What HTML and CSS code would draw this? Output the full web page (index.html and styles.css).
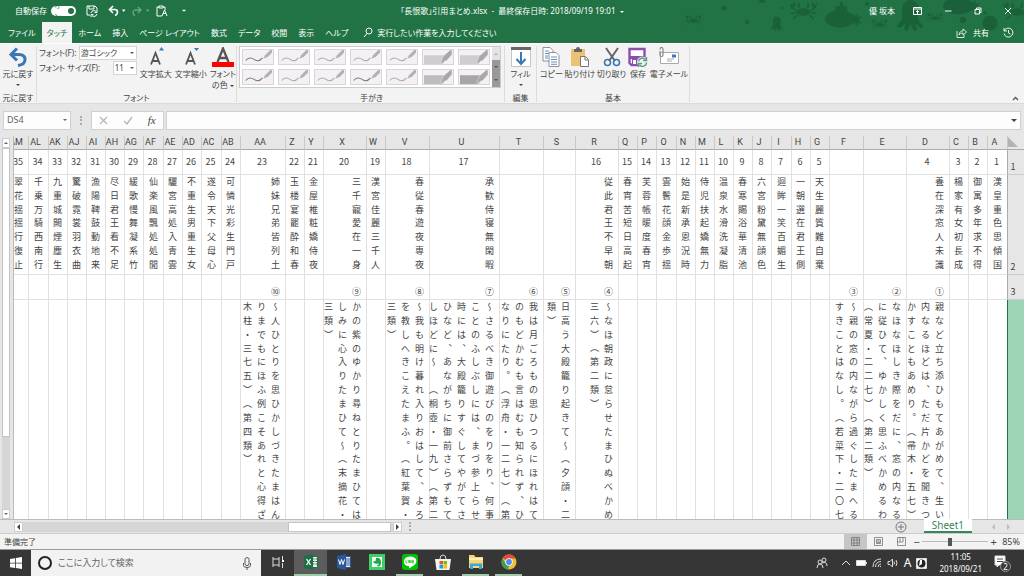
FILE: index.html
```html
<!DOCTYPE html>
<html lang="ja">
<head>
<meta charset="utf-8">
<title>「長恨歌」引用まとめ.xlsx</title>
<link rel="stylesheet" href="styles.css">
</head>
<body>
<svg class="defs" aria-hidden="true">
  <symbol id="pen" viewBox="0 0 32 16"><path d="M2 12c3-4 7-3 10-1s6 2 9-2" fill="none" stroke="currentColor" stroke-width="1.2"/><path d="M22 10l2-4 6-6h2v3l-5 5z" fill="#b4b0b4"/></symbol>
  <symbol id="marker" viewBox="0 0 32 16"><path d="M0 6h24l-3 10H0z" fill="currentColor"/><path d="M19 15l3-8 8-7h2v5l-6 7-3 1-1 2z" fill="#aaa7aa" stroke="#eee" stroke-width=".5"/></symbol>
  <symbol id="crab" viewBox="0 0 28 22"><path d="M7 13c2-5 12-5 14 0-1 5-13 5-14 0zM9 9L8 5l2-1 1 5zM17 9l1-5 2 1-1 4z"/><path d="M7 12L2 8M6 14H1M8 16l-4 4M21 12l5-4M22 14h5M20 16l4 4" fill="none" stroke="#1a6139" stroke-width="1.6"/><path d="M0 4l3 2 2-4 1 5-4 3zM28 4l-3 2-2-4-1 5 4 3z"/></symbol>
  <symbol id="octopus" viewBox="0 0 24 30"><path d="M4 10a8 9 0 0 1 16 0c0 4-2 6-1 9s4 4 5 7l-3 1-4-4 1 6-3 1-3-7-3 7-3-1 1-6-4 4-4-1c1-4 4-4 5-7s0-5 0-9z"/></symbol>
  <symbol id="submarine" viewBox="0 0 38 28"><ellipse cx="15" cy="18" rx="15" ry="8.5"/><path d="M10 10l1-5h4V1h3v4h3l2 6zM27 18l5-6 1 4 4-1-3 4 3 4-4-1-1 4z"/></symbol>
</svg>

<header class="top">
  <svg class="sea" viewBox="0 0 344 43" aria-hidden="true" fill="#1a6139">
    <use href="#crab" x="5" y="13" width="17" height="13"/><circle cx="44" cy="8" r="2.6"/><circle cx="67" cy="22" r="2"/><circle cx="82" cy="0" r="3"/>
    <use href="#octopus" x="91" y="16" width="12" height="15"/><circle cx="102" cy="8" r="1.5"/>
    <use href="#crab" x="109" y="-1" width="29" height="22"/><use href="#submarine" x="145" y="1" width="38" height="28"/>
    <circle cx="187" cy="4" r="2"/><use href="#crab" x="191" y="17" width="17" height="13"/><use href="#octopus" x="217" y="-1" width="27" height="32"/>
    <use href="#crab" x="247" y="11" width="16" height="12"/><use href="#submarine" x="263" y="-12" width="38" height="28"/><circle cx="283" cy="20" r="3.2"/><circle cx="310" cy="23" r="7.5"/><circle cx="305" cy="13" r="1.5"/><use href="#crab" x="323" y="-2" width="28" height="24"/>
  </svg>
  <div class="titlebar">
    <div class="quick">
      <label class="autosave">自動保存 <input type="checkbox" checked><span class="switch">オン<i></i></span></label>
      <button aria-label="保存"><svg width="12" height="12" viewBox="0 0 12 12"><path d="M1 1h8l2 2v2M1 1v9h3M3 1v3h5V1M5 8a3 3 0 0 1 5.500-1M11 5v2.500H8.500M11 9a3 3 0 0 1-5.500 1M5 12V9.500h2.500" /></svg></button>
      <button class="undo" aria-label="元に戻す"><svg width="18" height="12" viewBox="0 0 18 12"><path d="M5 1L1.500 4.500 5 8M2 4.500h4.500q3 0 3 2.500T7 10.500" stroke-width="1.600"/><path d="M14 4.500h3.500L15.700 7z" fill="#fff" stroke="none"/></svg></button>
      <button class="redo" aria-label="やり直し"><svg width="18" height="12" viewBox="0 0 18 12"><path d="M6 2l3 3-3 3M9 5H4Q1 5 1 7.500T3 10.500" stroke-width="1.300"/><path d="M14 4.500h3.500L15.700 7z" fill="#fff" stroke="none"/></svg></button>
      <button aria-label="貼り付け"><svg width="12" height="12" viewBox="0 0 12 12"><path d="M3 2H1v9h5M3 3V1h4v2zM7 2h2v3M6 11l2.500-6L11 11M7 8.500h3"/></svg></button>
      <button aria-label="カスタマイズ"><svg width="12" height="12" viewBox="0 0 12 12"><path d="M4.500 5h3L6 6.500z" fill="#fff" stroke-width=".5"/></svg></button>
    </div>
    <h1>「長恨歌」引用まとめ.xlsx &nbsp;-&nbsp; 最終保存日時: 2018/09/19 19:01 &nbsp;<span class="caret"></span></h1>
    <div class="window">
      <span>優 坂本</span>
      <button aria-label="リボンの表示"><svg width="9" height="8" viewBox="0 0 9 8"><path d="M.5.500h8v7h-8zM.5 2h8M4.500 7V3.500M3 5l1.500-1.500L6 5"/></svg></button>
      <button aria-label="最小化"><svg width="8" height="8" viewBox="0 0 8 8"><path d="M1 4h6.500"/></svg></button>
      <button aria-label="元のサイズ"><svg width="8" height="8" viewBox="0 0 8 8"><path d="M1 2.500h4.500V7H1zM2.500 2.500V1h4.500v4.500H5.500"/></svg></button>
      <button aria-label="閉じる"><svg width="8" height="8" viewBox="0 0 8 8"><path d="M1 1l6 6M7 1L1 7"/></svg></button>
    </div>
  </div>
  <nav class="tabs">
    <a href="#">ファイル</a><a href="#" class="active">タッチ</a><a href="#">ホーム</a><a href="#">挿入</a><a href="#">ページ レイアウト</a><a href="#">数式</a><a href="#">データ</a><a href="#">校閲</a><a href="#">表示</a><a href="#">ヘルプ</a>
    <a href="#" class="tell"><svg width="10" height="11" viewBox="0 0 10 11"><path d="M1 10l3.500-4" /><circle cx="6" cy="4" r="3"/></svg>実行したい作業を入力してください</a>
    <a href="#" class="share"><svg width="11" height="10" viewBox="0 0 11 10"><path d="M1 3v6.500h7V7M3 7c0-3 2-4 4-4V1l3.500 3L7 7V5C5 5 4 5.500 3 7z" stroke-width=".8"/></svg>共有</a>
    <a href="#" class="history" aria-label="履歴"><svg width="11" height="11" viewBox="0 0 11 11"><path d="M1 1v3h3M1.200 4a4.500 4.500 0 1 1-.2 2.500M5.500 3v3l2 1.200" stroke-width=".9"/></svg></a>
  </nav>
</header>

<section class="ribbon">
  <div class="group g-undo">
    <div class="tools"><button class="tool"><svg width="20" height="20" viewBox="0 0 20 20"><path d="M9 1.500L3 7.500l6 6M4 7.500h7q6 0 6 5T10 18.500" fill="none" stroke="#3a78b4" stroke-width="3"/></svg>元に戻す<span class="caret"></span></button></div>
    <h2>元に戻す</h2>
  </div>
  <div class="group g-font">
    <div class="tools">
      <div class="fields">
        <div class="field"><label for="font">フォント(F):</label><span class="pick wide"><select id="font"><option>游ゴシック</option></select></span></div>
        <div class="field"><label for="size">フォント サイズ(F):</label><span class="pick"><select id="size"><option>11</option></select></span></div>
      </div>
      <button class="tool"><svg width="20" height="20" viewBox="0 0 20 20"><path d="M5 17.500L9.500 6l4.500 11.500M6.500 14h6" fill="none" stroke="#555" stroke-width="1.800"/><path d="M13 3.500L15.500 0 18 3.500z" fill="#3a78b4"/></svg>文字拡大</button>
      <button class="tool"><svg width="20" height="20" viewBox="0 0 20 20"><path d="M5 17.500L9.500 6l4.500 11.500M6.500 14h6" fill="none" stroke="#555" stroke-width="1.800"/><path d="M13 1h5l-2.500 3z" fill="#3a78b4"/></svg>文字縮小</button>
      <button class="tool two"><svg width="22" height="20" viewBox="0 0 22 20"><path d="M5.500 15L11 1.500 16.500 15M7.500 11h7" fill="none" stroke="#555" stroke-width="2.300"/><path d="M0 15h22v5H0z" fill="#f00"/></svg>フォント<span>の色 <span class="caret"></span></span></button>
    </div>
    <h2>フォント</h2>
  </div>
  <div class="group g-ink">
    <div class="gallery">
      <div class="pens">
        <button aria-label="ペン 1" class="p1"><svg><use href="#pen"/></svg></button><button aria-label="ペン 2" class="p2"><svg><use href="#pen"/></svg></button><button aria-label="ペン 3" class="p2"><svg><use href="#pen"/></svg></button><button aria-label="ペン 4" class="p2"><svg><use href="#pen"/></svg></button><button aria-label="ペン 5" class="p2"><svg><use href="#pen"/></svg></button><button aria-label="蛍光ペン 1" class="m1"><svg><use href="#marker"/></svg></button><button aria-label="蛍光ペン 2" class="m1"><svg><use href="#marker"/></svg></button>
        <button aria-label="ペン 6" class="p1"><svg><use href="#pen"/></svg></button><button aria-label="ペン 7" class="p2"><svg><use href="#pen"/></svg></button><button aria-label="ペン 8" class="p2"><svg><use href="#pen"/></svg></button><button aria-label="ペン 9" class="p1"><svg><use href="#pen"/></svg></button><button aria-label="ペン 10" class="p2"><svg><use href="#pen"/></svg></button><button aria-label="蛍光ペン 3" class="m2"><svg><use href="#marker"/></svg></button><button aria-label="蛍光ペン 4" class="m3"><svg><use href="#marker"/></svg></button>
      </div>
      <div class="more"><button aria-label="上"><i class="caret up"></i></button><button aria-label="下"><i class="caret"></i></button><button aria-label="その他"><i class="caret"></i></button></div>
    </div>
    <h2>手がき</h2>
  </div>
  <div class="group g-edit">
    <div class="tools"><button class="tool"><svg width="20" height="20" viewBox="0 0 20 20"><path d="M.5.500h19v19H.5z" fill="#fff" stroke="#c6c6c6"/><path d="M0 0h20v3H0z" fill="#666"/><path d="M10 5v12M5.500 12l4.500 5 4.500-5" fill="none" stroke="#3a78b4" stroke-width="2"/></svg>フィル<span class="caret"></span></button></div>
    <h2>編集</h2>
  </div>
  <div class="group g-basic">
    <div class="tools">
      <button class="tool"><svg width="18" height="20" viewBox="0 0 18 20"><g fill="#fff" stroke="#777" stroke-width=".8"><path d="M1 .5h7l3 3V14H1z"/><path d="M7 5.500h7l3 3v11H7z"/></g><path d="M3 4h4M3 6.500h4M3 9h3M3 11h3M9 10h6M9 12.500h6M9 15h6M9 17.300h6" stroke="#5b93c6"/></svg>コピー</button>
      <button class="tool"><svg width="18" height="20" viewBox="0 0 18 20"><path d="M0 2h14v17H0z" fill="#ecc273"/><path d="M3 2h2q0-2 2-2t2 2h2v3H3z" fill="#666"/><path d="M9.500 9.500h5l3 3v7h-8zM14 10v3h3" fill="#fff" stroke="#777"/></svg>貼り付け</button>
      <button class="tool"><svg width="18" height="20" viewBox="0 0 18 20"><path d="M3 1l9 13M15 1L6 14" stroke="#666" stroke-width="2"/><g fill="none" stroke="#3a78b4" stroke-width="1.600"><circle cx="4.500" cy="15.500" r="3"/><circle cx="13.500" cy="15.500" r="3"/></g></svg>切り取り</button>
      <button class="tool"><svg width="20" height="20" viewBox="0 0 20 20"><path d="M1.500 2h15v16h-13l-2-2z" fill="#fff" stroke="#8e4cae" stroke-width="2.400"/><path d="M2 9h14v3H2zM4 12h9v6H4z" fill="#8e4cae"/><path d="M5 13h3v4H5z" fill="#fff"/><circle cx="14.500" cy="15" r="5.500" fill="#f2f2f2"/><path d="M10.500 14.500a4 4 0 0 1 7-2M18.500 15.500a4 4 0 0 1-7 2.500M18.500 10v3.500H15M10.500 20v-3.500H14" fill="none" stroke="#5aa182" stroke-width="1.400"/></svg>保存</button>
      <button class="tool"><svg width="22" height="20" viewBox="0 0 22 20"><path d="M2.500 5.500h18v11h-18z" fill="#fff" stroke="#aaa"/><path d="M14 7.500h4v3h-4z" fill="#3a78b4"/><path d="M9 12h7M9 14h5" stroke="#aaa"/><path d="M2 4v4q0 1.500 1.500 1.500T5 8V2.500Q5 .5 3.500.5T2 2.500" fill="none" stroke="#888" stroke-width="1.200"/></svg>電子メール</button>
    </div>
    <h2>基本</h2>
  </div>
  <button class="collapse" aria-label="リボンを折りたたむ"><svg width="7" height="5" viewBox="0 0 7 5"><path d="M1 4l2.500-2.500L6 4" fill="none" stroke="#555" stroke-width="1.300"/></svg></button>
</section>

<section class="formula">
  <div class="namebox"><input aria-label="名前ボックス" value="DS4"><span class="caret"></span></div>
  <i class="grip"></i>
  <div class="fx">
    <button aria-label="キャンセル"><svg width="9" height="9" viewBox="0 0 9 9"><path d="M1 1l7 7M8 1L1 8" stroke="#b5b5b5" stroke-width="1.200"/></svg></button>
    <button aria-label="入力"><svg width="10" height="9" viewBox="0 0 10 9"><path d="M1 5l3 3 5-7" fill="none" stroke="#b5b5b5" stroke-width="1.300"/></svg></button>
    <button class="fn">fx</button>
  </div>
  <div class="entry"><input aria-label="数式バー"><span class="caret"></span></div>
</section>

<main class="work">
  <div class="vscroll"><button aria-label="上へ"><i class="caret up"></i></button><div class="vtrack"><div class="vthumb"></div></div><button aria-label="下へ"><i class="caret"></i></button></div>
  <div class="sheet" dir="rtl">
    <table>
      <colgroup><col style="width:17px"><col style="width:20px"><col style="width:19px"><col style="width:19px"><col style="width:43px"><col style="width:43px"><col style="width:34px"><col style="width:19px"><col style="width:19px"><col style="width:20px"><col style="width:19px"><col style="width:19px"><col style="width:19px"><col style="width:19px"><col style="width:19px"><col style="width:20px"><col style="width:19px"><col style="width:19px"><col style="width:43px"><col style="width:32px"><col style="width:44px"><col style="width:70px"><col style="width:44px"><col style="width:19px"><col style="width:43px"><col style="width:19px"><col style="width:19px"><col style="width:45px"><col style="width:19px"><col style="width:20px"><col style="width:19px"><col style="width:19px"><col style="width:20px"><col style="width:19px"><col style="width:19px"><col style="width:19px"><col style="width:19px"><col style="width:19px"><col style="width:20px"><col style="width:19px"></colgroup>
      <thead><tr><th class="corner"><svg width="10" height="10" viewBox="0 0 10 10"><path d="M0 0v10h10z" fill="#b4b4b4"/></svg></th><th>A</th><th>B</th><th>C</th><th>D</th><th>E</th><th>F</th><th>G</th><th>H</th><th>I</th><th>J</th><th>K</th><th>L</th><th>M</th><th>N</th><th>O</th><th>P</th><th>Q</th><th>R</th><th>S</th><th>T</th><th>U</th><th>V</th><th>W</th><th>X</th><th>Y</th><th>Z</th><th>AA</th><th>AB</th><th>AC</th><th>AD</th><th>AE</th><th>AF</th><th>AG</th><th>AH</th><th>AI</th><th>AJ</th><th>AK</th><th>AL</th><th>AM</th></tr></thead>
      <tbody>
        <tr class="r1"><th>1</th><td>1</td><td>2</td><td>3</td><td>4</td><td></td><td></td><td>5</td><td>6</td><td>7</td><td>8</td><td>9</td><td>10</td><td>11</td><td>12</td><td>13</td><td>14</td><td>15</td><td>16</td><td></td><td></td><td>17</td><td>18</td><td>19</td><td>20</td><td>21</td><td>22</td><td>23</td><td>24</td><td>25</td><td>26</td><td>27</td><td>28</td><td>29</td><td>30</td><td>31</td><td>32</td><td>33</td><td>34</td><td>35</td></tr>
        <tr class="r2"><th>2</th><td><p>漢皇重色思傾国</p></td><td><p>御寓多年求不得</p></td><td><p>楊家有女初長成</p></td><td><p>養在深窓人未識</p></td><td></td><td></td><td><p>天生麗質難自棄</p></td><td><p>一朝選在君王側</p></td><td><p>迴眸一笑百媚生</p></td><td><p>六宮粉黛無顔色</p></td><td><p>春寒賜浴華清池</p></td><td><p>温泉水滑洗凝脂</p></td><td><p>侍児扶起嬌無力</p></td><td><p>始是新承恩況時</p></td><td><p>雲鬢花顔金歩揺</p></td><td><p>芙蓉帳暖度春宵</p></td><td><p>春宵苦短日高起</p></td><td><p>従此君王不早朝</p></td><td></td><td></td><td><p>承歓侍寝無閑暇</p></td><td><p>春従春遊夜専夜</p></td><td><p>漢宮佳麗三千人</p></td><td><p>三千寵愛在一身</p></td><td><p>金屋椎粧嬌侍夜</p></td><td><p>玉楼宴罷酔和春</p></td><td><p>姉妹兄弟皆列土</p></td><td><p>可憐光彩生門戸</p></td><td><p>遂令天下父母心</p></td><td><p>不重生男重生女</p></td><td><p>驪宮高処入青雲</p></td><td><p>仙楽風飄処処聞</p></td><td><p>緩歌慢舞凝系竹</p></td><td><p>尽日君王看不足</p></td><td><p>漁陽鞞鼓動地来</p></td><td><p>驚破霓裳羽衣曲</p></td><td><p>九重城闕煙塵生</p></td><td><p>千乗万騎西南行</p></td><td><p>翠花揺揺行復止</p></td></tr>
        <tr class="r3"><th>3</th><td></td><td></td><td></td><td>①</td><td>②</td><td>③</td><td></td><td></td><td></td><td></td><td></td><td></td><td></td><td></td><td></td><td></td><td></td><td>④</td><td>⑤</td><td>⑥</td><td>⑦</td><td>⑧</td><td></td><td>⑨</td><td></td><td></td><td>⑩</td><td></td><td></td><td></td><td></td><td></td><td></td><td></td><td></td><td></td><td></td><td></td><td></td></tr>
        <tr class="r4"><th></th><td></td><td></td><td></td>
          <td><div><p>親など立ち添ひもてあがめて、生い</p><p>内なるほどは、ただ片かどを聞きつ</p><p>かすこともあめり。（帚木・五七）</p></div></td>
          <td><div><p>なほなほしき際をだに、窓の内なる</p><p>に従ひて、ゆかしく思ふべかめるわ</p><p style="--n:13">（常夏・二二七）（第二類）</p></div></td>
          <td><div><p>〜親の窓の内ながら過ぐしたまへる</p><p>すきことはなし。（若菜下・二〇七</p></div></td>
          <td></td><td></td><td></td><td></td><td></td><td></td><td></td><td></td><td></td><td></td><td></td>
          <td><div><p>〜なほ朝政に怠らせたまひぬべかめ</p><p style="--n:8">三六）（第二類）</p></div></td>
          <td><div><p>日高う大殿籠り起きて〜（夕顔・二</p><p style="--n:2">類）</p></div></td>
          <td><div><p>我は月ごろもの思ひつるにほれはて</p><p>のもどかむも言はむも知られず、ひ</p><p>なりにたり。（浮舟・一二七）（第</p></div></td>
          <td><div><p>〜さるべき御遊びのをりをり、何事</p><p>ことのふしぶしには、まづ参上らせ</p><p>時には、大殿籠りすぐしてやがてさ</p><p>ひなど、あながちに御前さらずもて</p><p>しほどに〜　（桐壺・一九）（第二</p></div></td>
          <td><div><p>〜我も明け暮れ入りおはして、よろ</p><p>を教しへきこえたまふ。（紅葉賀・</p><p style="--n:3">三類）</p></div></td>
          <td></td>
          <td><div><p>かの紫のゆかり尋ねとりたまひては</p><p>しみに心入りたまひて〜（末摘花・</p><p style="--n:3">三類）</p></div></td>
          <td></td><td></td>
          <td><div><p>〜人ひとりを思ひかしづきたまはん</p><p>りまでもにほふ例こそあれと心得ざ</p><p style="--n:12">木柱・三七五）（第四類）</p></div></td>
          <td></td><td></td><td></td><td></td><td></td><td></td><td></td><td></td><td></td><td></td><td></td><td></td></tr>
      </tbody>
    </table>
  </div>
</main>

<section class="sheetbar">
  <div class="hscroll"><button aria-label="左へ"><i class="caret left"></i></button><div class="htrack"><div class="hthumb"></div></div><button aria-label="右へ"><i class="caret right"></i></button></div>
  <i class="grip"></i>
  <div class="sheets">
    <button aria-label="新しいシート"><svg width="12" height="12" viewBox="0 0 12 12" fill="none" stroke="#777"><circle cx="6" cy="6" r="5"/><path d="M3 6h6M6 3v6"/></svg></button>
    <a href="#" class="sheettab">Sheet1</a>
    <i class="caret left dim"></i><i class="caret right dim"></i>
  </div>
</section>

<footer class="status">
  <span>準備完了</span>
  <div class="views">
    <button class="on" aria-label="標準"><svg width="9" height="9" viewBox="0 0 9 9"><path d="M.5.500h8v8h-8zM3 0v9M6 0v9M0 3h9M0 6h9"/></svg></button>
    <button aria-label="ページ レイアウト"><svg width="9" height="9" viewBox="0 0 9 9"><path d="M.5.500h8v8h-8zM2.500 2.500h4v4h-4zM3 4h3M3 5.500h3"/></svg></button>
    <button aria-label="改ページ"><svg width="9" height="9" viewBox="0 0 9 9"><path d="M.5.500h8v8h-8zM3 0v5h3V0M0 5h3"/></svg></button>
  </div>
  <div class="zoom"><button aria-label="縮小">−</button><input type="range" aria-label="ズーム" min="10" max="190" value="85"><button aria-label="拡大">+</button><span>85%</span></div>
</footer>

<nav class="taskbar">
  <button class="start" aria-label="スタート"><svg width="12" height="12" viewBox="0 0 12 12"><path d="M0 2l5-.8v4.500H0zM5.800 1L12 0v5.700H5.800zM0 6.500h5V11l-5-.8zM5.800 6.500H12V12l-6.200-.9z" fill="#fff"/></svg></button>
  <label class="search"><i class="ring"></i><input type="text" aria-label="検索" placeholder="ここに入力して検索"><svg width="8" height="13" viewBox="0 0 8 13"><rect x="2" y=".6" width="4" height="8" rx="2" fill="none" stroke="#555"/><path d="M.5 6v2.500q0 2 3.500 2t3.500-2V6M4 10.500V13" fill="none" stroke="#555"/></svg></label>
  <div class="apps">
    <button aria-label="タスク ビュー"><svg width="12" height="12" viewBox="0 0 12 12"><path d="M1 1v2h6V1M1 11V9h6v2M1 3v6M7 3v6M10.500 0v4M10.500 7v5" fill="none" stroke="#ddd"/><path d="M10 4h2v2h-2z" fill="#fff"/></svg></button>
    <button class="run current" aria-label="Excel"><svg width="14" height="16" viewBox="0 0 14 16"><path d="M8 2.500h5.500v11H8z" fill="#eee" stroke="#1d7044"/><path d="M9 5h1.500M11.500 5H13M9 7.500h1.500M11.500 7.500H13M9 10h1.500M11.500 10H13" stroke="#1d7044"/><path d="M0 2l9-2v16l-9-2z" fill="#1d7044"/><path d="M2.500 5l4 6M6.500 5l-4 6" stroke="#fff" stroke-width="1.300"/></svg></button>
    <button aria-label="Word"><svg width="14" height="16" viewBox="0 0 14 16"><path d="M8 2.500h5.500v11H8z" fill="#eee" stroke="#2b579a"/><path d="M9 5h4M9 7h4M9 9h4M9 11h4" stroke="#2b579a"/><path d="M0 2l9-2v16l-9-2z" fill="#2b579a"/><path d="M1.500 5.500L3 10.500l1.500-5 1.500 5 1.500-5" fill="none" stroke="#fff"/></svg></button>
    <button aria-label="Evernote"><svg width="16" height="16" viewBox="0 0 16 16"><path d="M1.500 1.500h13v13h-13z" fill="#fff" stroke="#3fcf68" stroke-width="3"/><path d="M7 4h3q2 1 2 4 0 4.500-2.500 4.500Q8 12.500 8 11h1.500V9.500Q5 10.500 4 7.500L6.500 7z" fill="#20a846"/></svg></button>
    <button class="run" aria-label="LINE"><svg width="16" height="16" viewBox="0 0 16 16"><rect width="16" height="16" rx="3" fill="#00c300"/><path d="M8 2.500c8 0 8 7 3 9.500l-4 2.500v-2.200C0 12 0 2.500 8 2.500z" fill="#fff"/><path d="M4 6v3h1.200M6.300 6v3M7.500 9V6l1.700 3V6M12 6.300h-1.400V9H12M10.600 7.500H12" fill="none" stroke="#00c300" stroke-width=".7"/></svg></button>
    <button aria-label="Store"><svg width="16" height="16" viewBox="0 0 16 16"><path d="M5 5Q5 1 8 1t3 4" fill="none" stroke="#ddd"/><path d="M0 5h16l-1.500 11h-13z" fill="#f3f3f3"/><path d="M4.500 7H8v3.500H4.500z" fill="#f05022"/><path d="M8.500 7H12v3.500H8.500z" fill="#7fba00"/><path d="M4.500 11H8v3.500H4.500z" fill="#00a4ef"/><path d="M8.500 11H12v3.500H8.500z" fill="#ffb900"/></svg></button>
    <button class="run" aria-label="エクスプローラー"><svg width="16" height="16" viewBox="0 0 16 16"><path d="M1 1h5l1.500 2H15v11H1z" fill="#f6d675"/><path d="M1 4h14v2H1z" fill="#fff0b5"/><path d="M2 15V9.500h12V15h-3v-3H5v3z" fill="#3aa6e0"/></svg></button>
    <button class="run" aria-label="Chrome"><svg width="16" height="16" viewBox="0 0 16 16"><circle cx="8" cy="8" r="7.500" fill="#e9c036"/><path d="M8 8L1.500 4.300A7.500 7.500 0 0 1 14.600 4.500H8z" fill="#e24a3b"/><path d="M1.500 4.300L5 10l3 1.500-1 4A7.500 7.500 0 0 1 1.500 4.300z" fill="#3f9e52"/><circle cx="8" cy="8" r="3.700" fill="#fff"/><circle cx="8" cy="8" r="2.900" fill="#4c8bf5"/></svg></button>
  </div>
  <div class="tray">
    <svg width="12" height="12" viewBox="0 0 12 12"><circle cx="4" cy="5" r="2"/><circle cx="8" cy="3" r="2"/><path d="M1 11q0-4 3-4t3 4M6 6q5-2 5 3"/></svg>
    <svg width="10" height="8" viewBox="0 0 10 8"><path d="M1 6l4-4 4 4"/></svg>
    <svg width="11" height="8" viewBox="0 0 11 8"><path d="M.5 1.500h9v5h-9z" fill="#fff"/><path d="M10.500 3v2"/></svg>
    <svg width="10" height="10" viewBox="0 0 10 10"><path d="M1 9Q1 1 9 1M3.500 9q0-5 5.500-5.500M6 9q0-2.500 3-3M8.500 9V8"/></svg>
    <svg width="12" height="10" viewBox="0 0 12 10"><path d="M1 3.500h2L5.500 1v8L3 6.500H1zM7 3.500q1 1.500 0 3M9 2q2 3 0 6"/></svg>
    <span class="ime">A</span>
    <svg width="11" height="11" viewBox="0 0 11 11"><path d="M.5.500h10v10H.5z" fill="#fff"/><circle cx="5.500" cy="5.500" r="4" fill="#222" stroke="none"/><path d="M4 2h2v4L3 8z" fill="#fff" stroke="none"/></svg>
    <div class="clock"><time>11:05</time><time>2018/09/21</time></div>
    <svg class="note" width="17" height="17" viewBox="0 0 17 17"><path d="M1 1h10v9H5l-2 2v-2H1z" fill="#fff"/><path d="M3 4h6M3 6.500h6" stroke="#444"/><circle cx="11.500" cy="11.500" r="5" fill="#3a3a3a" stroke="#999"/><text x="11.500" y="14.500" text-anchor="middle">2</text></svg>
  </div>
</nav>
</body>
</html>
```
FILE: styles.css
```css
* { box-sizing: border-box; }
body {
  margin: 0;
  height: 100vh;
  display: flex;
  flex-direction: column;
  overflow: hidden;
  background: #e6e6e6;
  color: #444;
  font: 8px/12px "Noto Sans", "Noto Sans CJK JP", sans-serif;
  font-feature-settings: "palt";
}
button, input, select { font: inherit; color: inherit; font-feature-settings: inherit; border: 0; padding: 0; background: none; border-radius: 0; outline: 0; }
button { display: flex; align-items: center; justify-content: center; }
a { color: inherit; text-decoration: none; }
h1, h2, p { margin: 0; font: inherit; }
svg { display: block; flex: none; }
.defs { position: absolute; width: 0; height: 0; }

.caret { display: inline-block; flex: none; border: 2px solid transparent; border-top-color: currentColor; border-bottom-width: 0; vertical-align: middle; }
.caret.up { border: 2px solid transparent; border-bottom-color: currentColor; border-top-width: 0; }
.caret.left { border: 3px solid transparent; border-right-color: currentColor; border-left-width: 0; }
.caret.right { border: 3px solid transparent; border-left-color: currentColor; border-right-width: 0; }
.caret.dim { color: #bbb; }
.grip { width: 2px; height: 9px; border-left: 2px dotted #aaa; }

/* Title bar and tabs */
.top { position: relative; background: #217346; color: #fff; }
.top svg { fill: none; stroke: #fff; }
.top .sea { position: absolute; right: 0; top: 0; width: 344px; height: 43px; fill: #1a6139; stroke: none; }
.titlebar, .tabs { position: relative; display: flex; align-items: center; }
.titlebar { display: grid; grid-template-columns: 1fr auto 1fr; height: 22px; }
.quick { display: flex; align-items: center; gap: 10px; padding-left: 15px; }
.autosave { display: flex; align-items: center; gap: 4px; }
.autosave input { position: absolute; margin: 0; opacity: 0; }
.switch { display: flex; align-items: center; justify-content: space-between; width: 25px; height: 10px; padding: 0 2px 0 3px; border-radius: 5px; background: #fff; color: #217346; }
.switch i { width: 6px; height: 6px; border-radius: 50%; background: #217346; }
.undo { margin-right: -4px; }
.redo { opacity: .35; margin-right: -4px; }
.window { display: flex; align-items: center; justify-content: flex-end; gap: 22px; padding-right: 12px; }
.window span { margin-right: -4px; }
.tabs { height: 21px; gap: 1px; padding-left: 3px; }
.tabs a { display: flex; align-items: center; height: 100%; padding: 0 5px; }
.tabs .active { background: #f3f3f3; color: #217346; }
.tabs .tell { gap: 4px; margin-left: 4px; }
.tabs .share { margin-left: auto; gap: 6px; }
.tabs .history { padding: 0 10px 0 8px; }

/* Ribbon */
.ribbon { display: flex; height: 60px; padding-top: 2px; background: #f3f3f3; border-top: 1px solid #fff; }
.group { display: flex; flex-direction: column; justify-content: space-between; margin-bottom: 1px; border-right: 1px solid #dcdcdc; white-space: nowrap; }
.group h2 { line-height: 8px; text-align: center; }
.tools { display: flex; align-items: flex-start; }
.tool { flex-direction: column; gap: 1px; line-height: 12px; padding-top: 1px; }
.tool > .caret { margin-top: 3px; }
.tool.two { line-height: 9px; gap: 2px; }
.g-undo { width: 37px; }
.g-undo .tools, .g-edit .tools { justify-content: center; }
.g-font { width: 200px; }
.g-font .tools { gap: 3px; padding-left: 2px; }
.fields { width: 98px; display: grid; gap: 1px; }
.field { display: flex; justify-content: space-between; align-items: center; }
.pick { position: relative; width: 24px; height: 14px; border: 1px solid #d4d4d4; background: #fff; }
.pick.wide { width: 58px; }
.pick select { display: block; appearance: none; width: 100%; height: 12px; padding-left: 1px; }
.pick::after { content: ""; position: absolute; right: 2px; top: 5px; border: 2px solid transparent; border-top-color: #555; border-bottom-width: 0; }
.g-ink { width: 268px; padding-left: 2px; }
.gallery { display: flex; width: 262px; height: 42px; border: 1px solid #ccc; background: #fff; }
.pens { flex: 1; display: grid; grid-template-columns: repeat(7, 32px); gap: 4px; padding: 2px; }
.pens button { height: 16px; border: 1px solid #d8d4d8; background: #f4f0f5; }
.pens svg { width: 30px; height: 14px; }
.p1 { color: #777; }
.p2 { color: #aaa; }
.m1 { color: #d0ccd0; }
.m2 { color: #bfbcbf; }
.m3 { color: #a8a6a8; }
.more { display: grid; grid-template-rows: repeat(3, 1fr); width: 10px; background: #999; color: #555; }
.more button:first-child { background: #e4e4e4; color: #aaa; }
.g-edit { width: 32px; }
.g-basic { width: 153px; }
.g-basic .tools { padding-left: 2px; justify-content: space-around; }
.collapse { margin: auto 5px 2px auto; }

/* Formula bar */
.formula { display: flex; align-items: center; height: 33px; padding: 0 3px; border-top: 1px solid #dadada; }
.namebox, .fx, .entry { display: flex; align-items: center; height: 19px; border: 1px solid #d0d0d0; background: #fdfdfd; }
.namebox { width: 68px; padding: 0 3px; margin-right: 9px; font-size: 9px; color: #666; }
.namebox input, .entry input { flex: 1; min-width: 0; }
.formula .grip { margin-right: 9px; }
.fx { width: 73px; justify-content: space-around; }
.fn { font: italic 11px/12px "Liberation Serif", serif; }
.entry { flex: 1; margin-left: 2px; padding-right: 3px; }
.entry .caret { border-width: 3px 3px 0; }

/* Worksheet */
.work { flex: 1; min-height: 0; display: flex; }
.vscroll { width: 14px; padding: 2px 3px 0 2px; display: flex; flex-direction: column; border-right: 1px solid #bbb; }
.vscroll button { height: 10px; background: #fff; border: 1px solid #ccc; color: #666; }
.vtrack { flex: 1; background: #d6d6d6; }
.vthumb { height: 80%; background: #fff; border: 1px solid #c4c4c4; }
.sheet { flex: 1; min-width: 0; overflow: hidden; background: #fff; }
table { table-layout: fixed; width: 1px; border-spacing: 0; font: 9px/14px "Noto Sans CJK JP", sans-serif; text-spacing-trim: space-all; }
th, td { padding: 0; font-weight: normal; vertical-align: top; border-left: 1px solid #e0e0e0; border-bottom: 1px solid #e0e0e0; white-space: nowrap; }
th { background: #e6e6e6; }
thead th { height: 14px; line-height: 13px; font-family: Roboto, sans-serif; border-left-color: #c8c8c8; border-bottom-color: #ababab; padding-left: 0; padding-right: 4px; direction: ltr; text-align: center; }
thead .corner { padding: 0; }
thead .corner svg { margin: 1px; }
tbody th { vertical-align: bottom; border-left-color: #ababab; border-bottom-color: #ccc; padding-right: 6px; text-align: center; }
.r1 { height: 25px; }
.r1 td { text-align: center; padding-top: 5px; direction: ltr; }
.r2 { height: 100px; }
.r3 { height: 25px; }
.r3 td { vertical-align: bottom; text-align: right; padding-right: 5px; padding-bottom: 0; }
.r4 { height: 1200px; }
.r4 th { background: #9fd5b7; border-left: 1px solid #217346; }
/* Vertical lines: each character is spread evenly over the line's height */
td p {
  --n: 16;
  writing-mode: vertical-rl;
  direction: ltr;
  width: 14px;
  height: calc(var(--n) * 111px / 8 - 5px);
  text-align: justify;
  text-align-last: justify;
  text-justify: inter-character;
}
.r2 p { --n: 7; margin: 2px 3px 0 0; }
.r4 div { display: flex; margin: 2px 3px 0 0; }

/* Sheet tabs and horizontal scroll */
.sheetbar { display: flex; height: 15px; padding-left: 14px; align-items: center; border-top: 1px solid #bbb; border-bottom: 1px solid #ccc; }
.hscroll { display: flex; height: 10px; width: 388px; }
.hscroll button { width: 9px; background: #fff; border: 1px solid #ccc; }
.htrack { flex: 1; display: flex; justify-content: flex-end; padding-right: 2px; background: #d6d6d6; }
.hthumb { width: 28%; background: #fff; border: 1px solid #c4c4c4; }
.sheetbar .grip { margin-left: 7px; }
.sheets { margin-left: auto; display: flex; align-items: center; gap: 12px; padding-right: 14px; }
.sheettab { margin: -1px 8px 0 5px; padding: 0 8px; height: 14px; background: #fff; border-bottom: 2px solid #35875a; color: #35875a; font-size: 10px; line-height: 13px; }

/* Status bar */
.status { display: flex; align-items: center; height: 15px; padding: 0 4px; background: #f3f3f3; }
.views { display: flex; margin-left: auto; height: 100%; }
.views button { width: 23px; }
.views .on { background: #c6c6c6; }
.views svg { fill: none; stroke: #777; stroke-width: .8; }
.zoom { display: flex; align-items: center; gap: 2px; }
.zoom button { font-size: 11px; width: 7px; }
.zoom span { margin-left: 3px; font-size: 9px; }
.zoom input { appearance: none; margin: 0; width: 66px; height: 10px; background: linear-gradient(#bbb, #bbb) center / 100% 1px no-repeat; }
.zoom input::-webkit-slider-thumb { appearance: none; width: 4px; height: 8px; background: #555; }

/* Taskbar */
.taskbar { display: flex; height: 27px; background: #363636; color: #fff; border-top: 1px solid #999; }
.start { width: 31px; }
.search { display: flex; align-items: center; width: 230px; padding: 0 10px 0 7px; background: #f2f2f2; color: #555; }
.ring { width: 14px; height: 14px; border: 2px solid #222; border-radius: 50%; margin-right: 6px; }
.search input { flex: 1; min-width: 0; font-size: 9px; }
.search input::placeholder { color: #666; }
.apps { display: flex; }
.apps button { width: 33px; border-bottom: 2px solid transparent; }
.apps .run { background: linear-gradient(#9fcba9, #9fcba9) center bottom / 27px 2px no-repeat border-box; }
.apps .current { background: linear-gradient(#9fcba9, #9fcba9) center bottom / 33px 2px no-repeat border-box, #5c5c5c; }
.tray { display: flex; align-items: center; margin-left: auto; gap: 5px; padding-right: 13px; }
.tray svg { fill: none; stroke: #ddd; }
.tray svg:first-child { margin-right: 8px; }
.ime { font-size: 12px; }
.clock { display: grid; text-align: center; line-height: 12px; margin: 0 7px; }
.note text { font: 8px "Noto Sans", sans-serif; fill: #fff; stroke: none; }
```
